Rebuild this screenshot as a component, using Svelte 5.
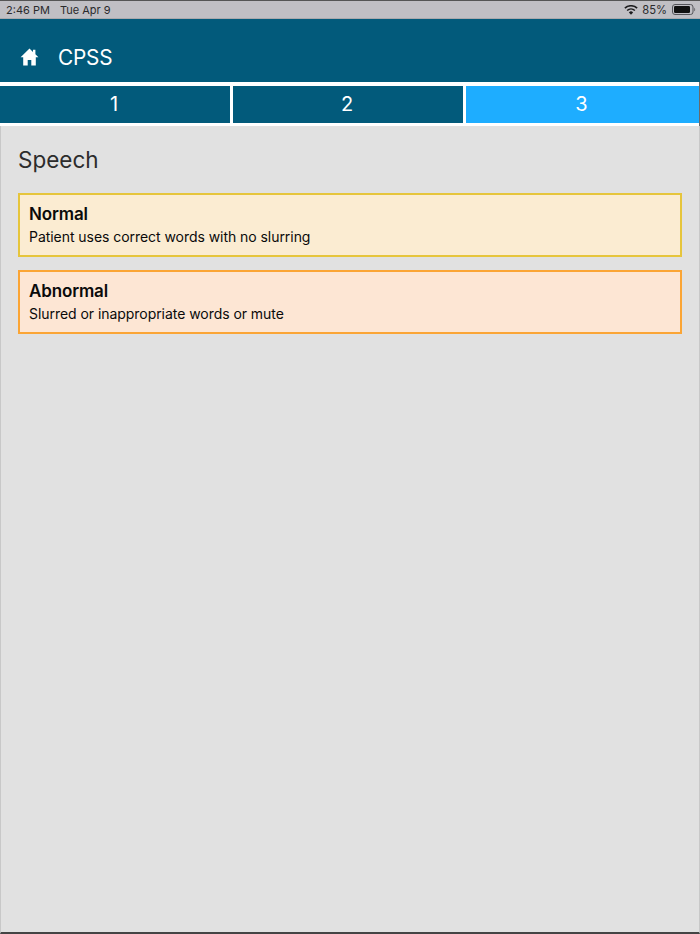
<script lang="ts">
	const tabs = [1, 2, 3];
	const current = 3;
	const options = [
		{ title: 'Normal', text: 'Patient uses correct words with no slurring', kind: 'normal' },
		{ title: 'Abnormal', text: 'Slurred or inappropriate words or mute', kind: 'abnormal' }
	];
</script>

<div class="page">
	<div class="status">
		<div class="time"><span>2:46 PM</span><span>Tue Apr 9</span></div>
		<div class="sys">
			<svg width="14" height="10" viewBox="0 0 14 10">
				<path d="M7 9.8 4.9 7.4a3 3 0 0 1 4.2 0z" fill="#1c1c1e" />
				<path d="M3.6 6.1 2.6 5a6.4 6.4 0 0 1 8.8 0l-1 1.1a5 5 0 0 0-6.8 0z" fill="#1c1c1e" />
				<path d="M1.4 3.7.3 2.6a9.8 9.8 0 0 1 13.4 0l-1.1 1.1a8.2 8.2 0 0 0-11.2 0z" fill="#1c1c1e" />
			</svg>
			<span class="pct">85%</span>
			<svg width="24" height="11" viewBox="0 0 24 11">
				<rect x="0.5" y="0.5" width="20.5" height="10" rx="2.5" fill="none" stroke="#55555a" />
				<rect x="2" y="2" width="16" height="7" rx="1.2" fill="#111" />
				<path d="M22 3.7c.8.2 1.2.9 1.2 1.8s-.4 1.6-1.2 1.8z" fill="#77777c" />
			</svg>
		</div>
	</div>

	<header class="bar">
		<svg class="home" width="19" height="18" viewBox="0 0 19 18">
			<path d="M9.5.6.6 9.2h2.6V17.6h4.5v-5.7h3.6v5.7h4.5V9.2h2.6l-3-2.9V1.8h-2.4v2.2z" fill="#fff" />
		</svg>
		<span class="title">CPSS</span>
	</header>

	<nav class="tabs">
		{#each tabs as tab}
			<div class="tab" class:active={tab === current}>{tab}</div>
		{/each}
	</nav>

	<main class="content">
		<h1>Speech</h1>
		{#each options as o}
			<div class="option {o.kind}">
				<div class="name">{o.title}</div>
				<div class="desc">{o.text}</div>
			</div>
		{/each}
	</main>
</div>

<style>
	:global(body) {
		margin: 0;
		background: #e1e1e1;
	}

	.page {
		width: 700px;
		height: 934px;
		display: flex;
		flex-direction: column;
		overflow: hidden;
		font-family: Inter, "Liberation Sans", sans-serif;
	}

	.status {
		height: 19px;
		box-sizing: border-box;
		border-top: 1px solid #555;
		background: #c0bfc4;
		border-bottom: 1px solid #a9a9ad;
		display: flex;
		justify-content: space-between;
		align-items: center;
		padding: 0 4px 0 6px;
		font-size: 11px;
		color: #2a2a2c;
	}

	.time {
		display: flex;
		gap: 10px;
	}

	.sys {
		display: flex;
		align-items: center;
		gap: 4px;
	}

	.pct {
		margin-right: 1px;
		font-size: 11.2px;
	}

	.bar {
		height: 63px;
		background: #025a7b;
		display: flex;
		align-items: center;
		gap: 19px;
		padding: 13px 0 0 20px;
		box-sizing: border-box;
	}

	.title {
		color: #fff;
		font-size: 20.8px;
		letter-spacing: -0.2px;
	}

	.tabs {
		display: grid;
		grid-template-columns: 230px 230px 1fr;
		gap: 3px;
		background: #fff;
		padding: 4px 1px 3px 0;
		height: 44px;
		box-sizing: border-box;
		box-shadow: inset -1px 0 0 #6a6a6a;
	}

	.tab {
		background: #025a7b;
		color: #fff;
		font-size: 20px;
		display: flex;
		align-items: center;
		justify-content: center;
		padding: 0 2px 2px 0;
	}

	.tab.active {
		background: #1eadff;
	}

	.content {
		flex: 1;
		background: #e1e1e1;
		border-left: 1px solid #c8c8c8;
		border-right: 1px solid #c8c8c8;
		border-bottom: 2px solid #444;
		padding: 19px 17px 0;
		box-sizing: border-box;
	}

	h1 {
		margin: 0 0 18px;
		font-size: 22.5px;
		font-weight: 400;
		line-height: 30px;
		color: #2c2c2c;
	}

	.option {
		height: 64px;
		box-sizing: border-box;
		border: 2px solid;
		padding: 8px 9px;
		margin-bottom: 13px;
		color: #0a0a0a;
	}

	.normal {
		background: #fbecd2;
		border-color: #e6c53c;
	}

	.abnormal {
		background: #fde6d4;
		border-color: #fba535;
	}

	.name {
		font-size: 17px;
		font-weight: 600;
		line-height: 22px;
		letter-spacing: -0.15px;
	}

	.desc {
		margin-top: 1px;
		font-size: 14px;
		line-height: 21px;
		letter-spacing: -0.05px;
	}
</style>
